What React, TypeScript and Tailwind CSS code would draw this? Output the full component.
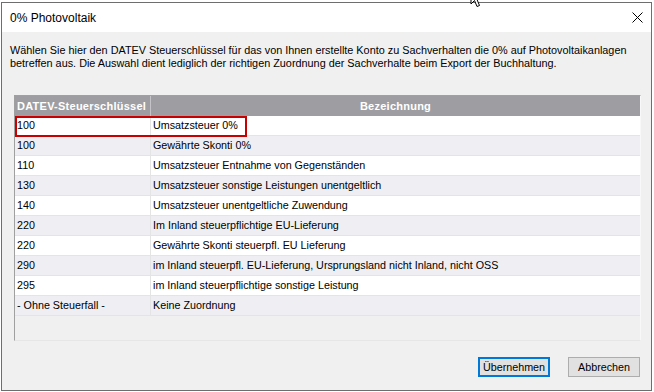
const rows = [
  { key: '100', text: 'Umsatzsteuer 0%' },
  { key: '100', text: 'Gewährte Skonti 0%' },
  { key: '110', text: 'Umsatzsteuer Entnahme von Gegenständen' },
  { key: '130', text: 'Umsatzsteuer sonstige Leistungen unentgeltlich' },
  { key: '140', text: 'Umsatzsteuer unentgeltliche Zuwendung' },
  { key: '220', text: 'Im Inland steuerpflichtige EU-Lieferung' },
  { key: '220', text: 'Gewährte Skonti steuerpfl. EU Lieferung' },
  { key: '290', text: 'im Inland steuerpfl. EU-Lieferung, Ursprungsland nicht Inland, nicht OSS' },
  { key: '295', text: 'im Inland steuerpflichtige sonstige Leistung' },
  { key: '- Ohne Steuerfall -', text: 'Keine Zuordnung' },
]

export default function App() {
  return (
    <div className="relative w-[654px] h-[392px] bg-white overflow-hidden font-['Liberation_Sans',Arial,sans-serif] text-black">
      {/* mouse cursor peeking in at the top */}
      <svg className="absolute left-[470px] top-[-12px]" width="16" height="22" viewBox="0 0 16 22">
        <path d="M1 1 L1 16 L4.5 12.5 L7 18.5 L9.5 17.5 L7 11.5 L12 11.5 Z" fill="white" stroke="black" strokeWidth="1" />
      </svg>

      <div className="ml-[1px] mt-[2px] w-[651px] h-[389px] border border-[#6e6e6e] flex flex-col">
        <div className="h-[29px] bg-white flex items-center justify-between pl-[8px] pr-[8px]">
          <span className="text-[12px]">0% Photovoltaik</span>
          <svg width="11" height="11" viewBox="0 0 11 11">
            <path d="M0.5 0.5 L10.5 10.5 M10.5 0.5 L0.5 10.5" stroke="black" strokeWidth="1" />
          </svg>
        </div>

        <div className="flex-1 bg-[#f0f0f0] flex flex-col">
          <p className="px-[8px] pt-[12px] text-[10.85px] leading-[13px]">
            Wählen Sie hier den DATEV Steuerschlüssel für das von Ihnen erstellte Konto zu Sachverhalten die 0% auf Photovoltaikanlagen betreffen aus. Die Auswahl dient lediglich der richtigen Zuordnung der Sachverhalte beim Export der Buchhaltung.
          </p>

          <div className="relative ml-[12px] mt-[25px] w-[627px] h-[246px] border-l border-t border-[#a0a0a0] border-r-[#f8f8f8] border-b-[#e6e6e6] border-r border-b text-[10.75px]">
            <div className="flex h-[20px] bg-[#9e9ea2] text-white font-bold text-[11px]">
              <div className="w-[136px] border-r border-[#c4c4c8] pl-[2px] flex items-center tracking-[0.25px]">DATEV-Steuerschlüssel</div>
              <div className="flex-1 flex items-center justify-center tracking-[0.25px]">Bezeichnung</div>
            </div>
            {rows.map((r, i) => (
              <div
                key={i}
                className={`flex h-[20px] border-b border-[#e4e4e4] ${i % 2 === 0 ? 'bg-white' : 'bg-[#efeff3]'}`}
              >
                <div className="w-[136px] border-r border-[#e4e4e4] pl-[2px] flex items-center">{r.key}</div>
                <div className="flex-1 pl-[2px] flex items-center">{r.text}</div>
              </div>
            ))}
            <div className="absolute left-[0px] top-[20px] w-[232px] h-[21px] border-2 border-[#c80000]" />
          </div>

          <div className="mt-[16px] flex justify-end gap-[18px] pr-[11px] text-[10.75px]">
            <button className="w-[72px] h-[20px] bg-[#e1e1e1] border-2 border-[#0078d7] flex items-center justify-center">Übernehmen</button>
            <button className="w-[72px] h-[20px] bg-[#e1e1e1] border border-[#adadad] flex items-center justify-center">Abbrechen</button>
          </div>
        </div>
      </div>
    </div>
  )
}
